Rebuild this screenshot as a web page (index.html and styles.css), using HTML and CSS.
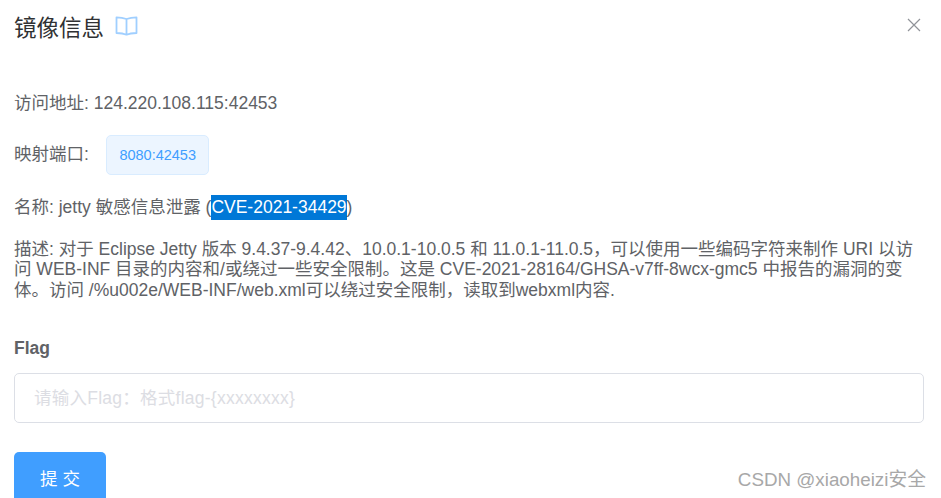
FILE: index.html
```html
<!DOCTYPE html>
<html lang="zh-CN">

<head>
    <meta charset="UTF-8">
    <title>镜像信息</title>
    <link rel="stylesheet" href="styles.css">
</head>

<body>
    <div class="dialog">
        <div class="dialog-header">
            <div class="dialog-title">
                <span>镜像信息</span>
                <svg class="book-icon" width="23" height="20" viewBox="0 0 23 20" fill="none">
                    <path d="M11.500 3 C8.500 1.800 4.500 1.300 1.500 1.300 V17 C4.500 17 8.500 17.300 11.500 18.700 C14.500 17.300 18.500 17 21.500 17 V1.300 C18.500 1.300 14.500 1.800 11.500 3 Z M11.500 3 V18.700" stroke="#a0cfff" stroke-width="1.800" stroke-linejoin="round"></path>
                </svg>
            </div>
            <svg class="close-icon" width="14" height="14" viewBox="0 0 14 14">
                <path d="M1 1 L13 13 M13 1 L1 13" stroke="#909399" stroke-width="1.200"></path>
            </svg>
        </div>

        <div class="info-row addr-row">访问地址: 124.220.108.115:42453</div>
        <div class="info-row port-row">映射端口: <span class="tag">8080:42453</span></div>
        <div class="info-row name-row">名称: jetty 敏感信息泄露 (<span class="selected">CVE-2021-34429</span>)</div>
        <div class="info-row desc-row">描述: 对于 Eclipse Jetty 版本 9.4.37-9.4.42、10.0.1-10.0.5 和 11.0.1-11.0.5，可以使用一些编码字符来制作 URI 以访问 WEB-INF 目录的内容和/或绕过一些安全限制。这是 CVE-2021-28164/GHSA-v7ff-8wcx-gmc5 中报告的漏洞的变体。访问 /%u002e/WEB-INF/web.xml可以绕过安全限制，读取到webxml内容.</div>

        <form class="flag-form">
            <label class="flag-label" for="flag">Flag</label>
            <input class="flag-input" id="flag" type="text" placeholder="请输入Flag：格式flag-{xxxxxxxx}">
            <button class="submit-button" type="button">提 交</button>
        </form>
    </div>

    <!-- 水印 -->
    <div class="watermark">CSDN @xiaoheizi安全</div>
</body>

</html>
```

FILE: styles.css
```css
html, body {
    height: 100%;
    overflow: hidden;
}

body {
    margin: 0;
    position: relative;
    background: #ffffff;
    font-family: "Liberation Sans", "Noto Sans CJK SC", sans-serif;
    font-size: 17.5px;
    color: #606266;
}

.dialog {
    padding: 0 17px 0 14px;
}

.dialog-header {
    display: flex;
    justify-content: space-between;
    align-items: center;
    height: 52px;
    padding-right: 3px;
}

.dialog-title {
    display: flex;
    align-items: center;
    gap: 11px;
    font-size: 22.500px;
    color: #303133;
}

.close-icon {
    margin-top: -3px;
}

.info-row {
    line-height: 20.500px;
}

.addr-row {
    margin-top: 41px;
}

.port-row {
    display: flex;
    align-items: center;
    margin-top: 21px;
}

.tag {
    display: inline-block;
    box-sizing: border-box;
    height: 40px;
    line-height: 38px;
    margin-left: 17px;
    padding: 0 12.500px;
    font-size: 14.500px;
    color: #409eff;
    background: #ecf5ff;
    border: 1px solid #d9ecff;
    border-radius: 5px;
}

.name-row {
    margin-top: 22px;
}

.selected {
    display: inline-block;
    line-height: 25px;
    margin-top: -5px;
    color: #ffffff;
    background: #0078d7;
}

.desc-row {
    margin-top: 19px;
}

.flag-form {
    display: flex;
    flex-direction: column;
    align-items: flex-start;
    margin-top: 28px;
}

.flag-label {
    font-weight: bold;
    line-height: 40px;
}

.flag-input {
    box-sizing: border-box;
    width: 100%;
    height: 50px;
    margin-top: 5px;
    padding: 0 19px;
    font-family: inherit;
    font-size: 17.5px;
    color: #606266;
    background: #ffffff;
    border: 1px solid #dcdfe6;
    border-radius: 5px;
    outline: none;
}

.flag-input::placeholder {
    color: #dcdde3;
    letter-spacing: 0.250px;
    opacity: 1;
}

.submit-button {
    width: 92px;
    height: 50px;
    margin-top: 29px;
    padding: 0;
    font-family: inherit;
    font-size: 17.5px;
    color: #ffffff;
    background: #409eff;
    border: none;
    border-radius: 5px;
}

.watermark {
    position: absolute;
    right: 15px;
    bottom: 7px;
    font-size: 18.800px;
    color: #a8a8a8;
}
```
